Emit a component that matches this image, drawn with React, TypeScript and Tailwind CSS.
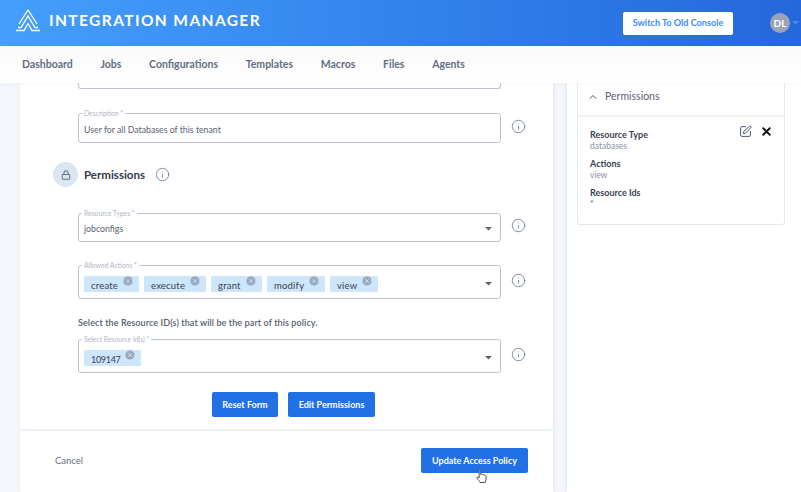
import React from 'react';
import { ChevronUp, Info, Lock, SquarePen, X, CircleX } from 'lucide-react';

const Logo = () => (
  <svg width="26" height="23" viewBox="0 0 26 23" fill="none" stroke="white" strokeWidth="1.3" className="shrink-0">
    <path d="M4 15 L13 1 L22 15" />
    <path d="M3 18.5 H6 L13 7 L20 18.5 H23" />
    <path d="M1 21.5 H9 L13 14.5 L17 21.5 H25" />
  </svg>
);

const Caret = ({ color = '#5f6673' }: { color?: string }) => (
  <svg width="7" height="4" viewBox="0 0 7 4" className="shrink-0">
    <path d="M0 0 H7 L3.5 3.5 Z" fill={color} />
  </svg>
);

const HandCursor = () => (
  <svg width="11" height="15" viewBox="0 0 14 18" className="absolute left-[476px] top-[469px]">
    <path
      d="M4 1.2 C4 .3 6 .3 6 1.2 V6.5 C6.8 6 8 6 8.4 6.8 C9.2 6.4 10.4 6.6 10.7 7.5 C11.6 7.2 12.8 7.6 12.8 8.8 V12.5 C12.8 14 12 15 11.6 16.6 H5.2 C4.6 15 3 13.6 1.4 11.2 C.6 10 2 9 3 10 L4 11 Z"
      fill="white"
      stroke="#444"
      strokeWidth="1.2"
    />
  </svg>
);

const InfoIcon = ({ className = '' }: { className?: string }) => (
  <Info size={15} strokeWidth={1.2} className={`text-[#5d6b88] shrink-0 ${className}`} />
);

const Chip = ({
  label,
  width,
  textClass = 'text-[9.5px] tracking-[0.2px]',
}: {
  label: string;
  width: string;
  textClass?: string;
}) => (
  <span className={`${width} h-4 shrink-0 bg-[#cde6fc] rounded-t-[2px] flex items-end justify-between pl-[7px] pr-[5px] leading-[13px] text-[#3b4151] ${textClass}`}>
    <span>{label}</span>
    <CircleX size={12} fill="#9aa9bb" stroke="#cde6fc" strokeWidth={1.5} className="self-start shrink-0 -mt-[1px]" />
  </span>
);

const Field = ({
  label,
  height,
  select,
  children,
}: {
  label: string;
  height: string;
  select?: boolean;
  children: React.ReactNode;
}) => (
  <div className="flex items-center gap-[10px] pl-[58px]">
    <fieldset className={`w-[423px] ${height} border border-[#bcc3d4] rounded-[3px] px-[5px] flex items-center`}>
      <legend className="-ml-[2px] px-[2px] text-[6.8px] leading-[8px] text-[#b0b6c2]">{label}</legend>
      <div className="flex-1 flex items-center gap-[5px] min-w-0">{children}</div>
      {select && (
        <span className="mr-[3px]">
          <Caret />
        </span>
      )}
    </fieldset>
    <InfoIcon />
  </div>
);

const navItems = ['Dashboard', 'Jobs', 'Configurations', 'Templates', 'Macros', 'Files', 'Agents'];

export default function App() {
  return (
    <div className="relative w-[801px] h-[492px] overflow-hidden flex flex-col bg-[#f3f6fa] font-['Lato','Noto_Sans',sans-serif] text-[#3b4151]">
      <header className="h-[46px] shrink-0 flex items-center pl-[15px] pr-[2px] bg-gradient-to-r from-[#459ffb] to-[#2567dc]">
        <div className="flex items-center gap-[8px] mb-[5px]">
          <Logo />
          <span className="text-white text-[15.5px] font-bold tracking-[1.4px]">INTEGRATION MANAGER</span>
        </div>
        <button className="ml-auto mr-[37px] w-[110px] h-[23px] bg-white rounded-[2px] text-[#3d8bf5] text-[9.1px] font-bold">
          Switch To Old Console
        </button>
        <div className="w-5 h-5 rounded-full bg-[#9aa3b7] flex items-center justify-center text-white text-[10px] font-bold mr-[2px]">
          DL
        </div>
        <Caret color="#4a8df0" />
      </header>

      <nav className="h-[37px] shrink-0 flex items-center pl-[22px] gap-[27.7px] bg-gradient-to-b from-[#fafafa] to-white text-[10.5px] font-bold text-[#656d80] z-10 shadow-[0_1px_4px_rgba(0,0,0,0.04)]">
        {navItems.map((item) => (
          <span key={item}>{item}</span>
        ))}
      </nav>

      <main className="flex-1 min-h-0 flex pl-[20px] gap-[14px]">
        <section className="w-[533px] bg-white shadow-[1px_0_3px_rgba(120,140,170,0.15)] flex flex-col">
          <div className="ml-[58px] w-[423px] h-[6px] border-x border-b border-[#bcc3d4] rounded-b-[3px]" />
          <div className="mt-[20px]">
            <Field label="Description *" height="h-[34px]">
              <span className="text-[8.75px] text-[#5b6270]">User for all Databases of this tenant</span>
            </Field>
          </div>

          <div className="mt-[19px] ml-[33px] flex items-center gap-[6px]">
            <span className="w-[25px] h-[25px] rounded-full bg-[#dbe6f1] flex items-center justify-center">
              <Lock size={10} strokeWidth={2.5} className="text-[#667088]" />
            </span>
            <h2 className="text-[11.5px] font-bold text-[#333a48]">Permissions</h2>
            <InfoIcon className="ml-[4px]" />
          </div>

          <div className="mt-[22px]">
            <Field label="Resource Types *" height="h-[33px]" select>
              <span className="text-[8.75px] text-[#5b6270]">jobconfigs</span>
            </Field>
          </div>

          <div className="mt-[19px]">
            <Field label="Allowed Actions *" height="h-[38px]" select>
              <Chip label="create" width="w-[55px]" />
              <Chip label="execute" width="w-[62px]" />
              <Chip label="grant" width="w-[51px]" />
              <Chip label="modify" width="w-[58px]" />
              <Chip label="view" width="w-[48px]" />
            </Field>
          </div>

          <p className="mt-[18px] ml-[58px] text-[9px] font-semibold text-[#565d6c] leading-[12px] tracking-[0.1px]">
            Select the Resource ID(s) that will be the part of this policy.
          </p>

          <div className="mt-[6px]">
            <Field label="Select Resource Id(s) *" height="h-[38px]" select>
              <Chip label="109147" width="w-[57px]" textClass="text-[9px] tracking-[-0.3px]" />
            </Field>
          </div>

          <div className="mt-[19px] flex justify-center gap-[10px] pl-[14px]">
            <button className="w-[66px] h-[25px] rounded-[2px] bg-[#2270e6] text-white text-[9px] font-bold">Reset Form</button>
            <button className="w-[87px] h-[25px] rounded-[2px] bg-[#2270e6] text-white text-[9px] font-bold">Edit Permissions</button>
          </div>

          <div className="mt-[12px] flex-1 border-t-2 border-[#eef0f4] flex items-start justify-between pl-[35px] pr-[25px] pt-[17px]">
            <span className="text-[9.5px] leading-[25px] text-[#6a7284]">Cancel</span>
            <button className="w-[107px] h-[25px] rounded-[2px] bg-[#2270e6] text-white text-[9px] font-bold">Update Access Policy</button>
          </div>
        </section>

        <aside className="w-[234px] bg-white shadow-[-1px_0_3px_rgba(120,140,170,0.15)] pl-[10px] pr-[16px]">
          <div className="h-[142px] border-x border-b border-[#e4e7ee] rounded-b-[3px]">
            <div className="h-[34px] border-b-2 border-[#eef0f4] flex items-center pl-[9px] pb-[5px] gap-[6px]">
              <ChevronUp size={12} strokeWidth={2} className="text-[#4d5565]" />
              <span className="text-[10.5px] text-[#5b6270]">Permissions</span>
            </div>
            <div className="relative pl-[12px] pt-[12px] text-[9px] leading-[11px]">
              <div className="absolute right-[11px] top-[8px] flex items-center gap-[8px]">
                <SquarePen size={13} strokeWidth={1.75} className="text-[#3b4d66]" />
                <X size={13} strokeWidth={3.5} className="text-[#111]" />
              </div>
              <p className="font-bold text-[#3b4151]">Resource Type</p>
              <p className="text-[8.5px] leading-[12px] text-[#8b93a3]">databases</p>
              <p className="mt-[6px] font-bold text-[#3b4151]">Actions</p>
              <p className="text-[8.5px] leading-[12px] text-[#8b93a3]">view</p>
              <p className="mt-[6px] font-bold text-[#3b4151]">Resource Ids</p>
              <p className="text-[8.5px] leading-[12px] text-[#2f6fd6]">*</p>
            </div>
          </div>
        </aside>
      </main>

      <HandCursor />
    </div>
  );
}
